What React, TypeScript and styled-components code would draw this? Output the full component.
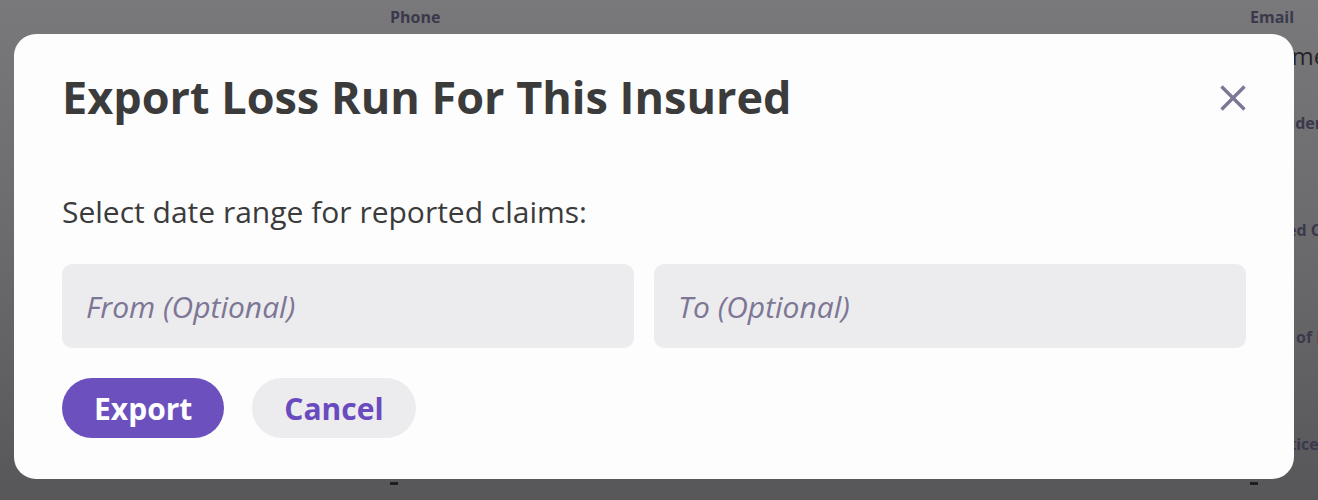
import styled, { createGlobalStyle } from "styled-components";

const GlobalStyle = createGlobalStyle`
  html, body {
    margin: 0;
    padding: 0;
  }
  body {
    font-family: "Open Sans", "Noto Sans", sans-serif;
    overflow: hidden;
  }
`;

const Page = styled.div`
  width: 1318px;
  height: 500px;
  background: linear-gradient(180deg, #79797c 0%, #6a6a6c 50%, #57575a 100%);
  display: grid;
  grid-template-columns: 390px 860px 1fr;
  grid-template-rows: 34px 466px;
  overflow: hidden;
`;

const HeadLabel = styled.div<{ col: number }>`
  grid-row: 1;
  grid-column: ${(p) => p.col};
  font-size: 16px;
  font-weight: 700;
  color: #3a394b;
  line-height: 34px;
`;

const Column = styled.div<{ col: number }>`
  grid-row: 2;
  grid-column: ${(p) => p.col};
  display: flex;
  flex-direction: column;
  white-space: nowrap;
  min-height: 0;
`;

const BigValue = styled.div`
  font-size: 24px;
  color: #252429;
  line-height: 44px;
  padding-left: 10px;
`;

const RowLabel = styled.div<{ last?: boolean }>`
  font-size: 16px;
  font-weight: 700;
  color: #3a394b;
  height: ${(p) => (p.last ? "auto" : "107px")};
  line-height: 24px;
  padding-left: 4px;
`;

const Dash = styled.div`
  margin-top: auto;
  width: 8px;
  height: 3px;
  background: #1e1e22;
  margin-bottom: 15px;
`;

const Modal = styled.div`
  position: fixed;
  top: 34px;
  left: 14px;
  width: 1280px;
  height: 445px;
  box-sizing: border-box;
  background: #fdfdfd;
  border-radius: 22px;
  padding: 37px 48px 0 48px;
  display: flex;
  flex-direction: column;
`;

const Header = styled.div`
  display: flex;
  align-items: center;
  justify-content: space-between;
`;

const Title = styled.h1`
  margin: 0;
  font-size: 45px;
  line-height: 52px;
  font-weight: 700;
  color: #3b3b3c;
`;

const CloseButton = styled.button`
  border: 0;
  background: none;
  padding: 0;
  width: 26px;
  height: 26px;
  margin-top: 2px;
  display: flex;
  cursor: pointer;
`;

const Prompt = styled.p`
  margin: 69px 0 0 0;
  font-size: 30px;
  line-height: 40px;
  color: #3b3b3c;
`;

const Fields = styled.div`
  display: grid;
  grid-template-columns: 572px 1fr;
  gap: 20px;
  margin-top: 32px;
`;

const DateInput = styled.input`
  height: 84px;
  box-sizing: border-box;
  border: 0;
  border-radius: 10px;
  background: #ececef;
  padding: 0 24px;
  font-family: inherit;
  font-size: 30px;
  color: #3b3b3c;
  outline: none;

  &::placeholder {
    color: #7d7694;
    font-style: italic;
  }
`;

const Actions = styled.div`
  display: flex;
  gap: 28px;
  margin-top: 30px;
`;

const ActionButton = styled.button<{ primary?: boolean }>`
  height: 60px;
  padding: 0 32px;
  border: 0;
  border-radius: 30px;
  font-family: inherit;
  font-size: 30px;
  font-weight: 700;
  background: ${(p) => (p.primary ? "#6c50be" : "#ececef")};
  color: ${(p) => (p.primary ? "#ffffff" : "#6a4bbf")};
  cursor: pointer;
`;

export default function App() {
  return (
    <>
      <GlobalStyle />
      <Page>
        <HeadLabel col={2}>Phone</HeadLabel>
        <HeadLabel col={3}>Email</HeadLabel>
        <Column col={2}>
          <Dash />
        </Column>
        <Column col={3}>
          <BigValue>Name</BigValue>
          <RowLabel style={{ marginTop: 33 }}>Provider</RowLabel>
          <RowLabel>Closed Claims</RowLabel>
          <RowLabel>Date of Loss</RowLabel>
          <RowLabel last>Practice</RowLabel>
          <Dash />
        </Column>
      </Page>
      <Modal role="dialog">
        <Header>
          <Title>Export Loss Run For This Insured</Title>
          <CloseButton aria-label="Close">
            <svg width="26" height="26" viewBox="0 0 26 26">
              <path d="M1.5 1.5 L24.5 24.5 M24.5 1.5 L1.5 24.5" stroke="#7d7694" strokeWidth="3.4" />
            </svg>
          </CloseButton>
        </Header>
        <Prompt>Select date range for reported claims:</Prompt>
        <Fields>
          <DateInput placeholder="From (Optional)" />
          <DateInput placeholder="To (Optional)" />
        </Fields>
        <Actions>
          <ActionButton primary>Export</ActionButton>
          <ActionButton>Cancel</ActionButton>
        </Actions>
      </Modal>
    </>
  );
}
